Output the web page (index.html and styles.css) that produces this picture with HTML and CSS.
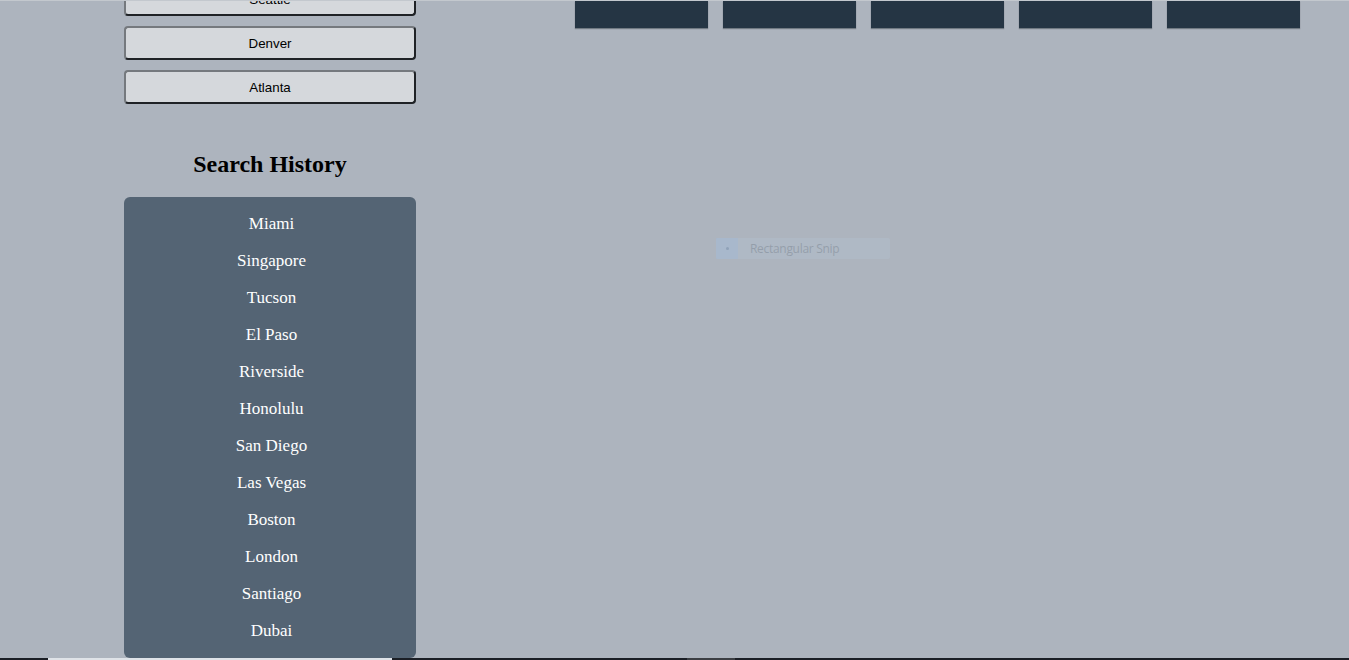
FILE: index.html
```html
<!DOCTYPE html>
<html>
<head>
<meta charset="utf-8">
<link rel="stylesheet" href="styles.css">
<title>Weather Dashboard</title>
</head>
<body>
<div class="topline"></div>
<main class="page">
  <aside class="sidebar">
    <div class="city-buttons">
      <button class="city-btn first">Seattle</button>
      <button class="city-btn">Denver</button>
      <button class="city-btn">Atlanta</button>
    </div>
    <h2 class="history-title">Search History</h2>
    <ul class="history">
      <li>Miami</li>
      <li>Singapore</li>
      <li>Tucson</li>
      <li>El Paso</li>
      <li>Riverside</li>
      <li>Honolulu</li>
      <li>San Diego</li>
      <li>Las Vegas</li>
      <li>Boston</li>
      <li>London</li>
      <li>Santiago</li>
      <li>Dubai</li>
    </ul>
  </aside>
  <section class="forecast">
    <div class="cards">
      <div class="card"></div>
      <div class="card"></div>
      <div class="card"></div>
      <div class="card"></div>
      <div class="card"></div>
    </div>
  </section>
  <div class="snip-ghost">
    <span class="snip-icon"></span>
    <span class="snip-label">Rectangular Snip</span>
  </div>
</main>
<div class="taskbar-edge">
  <span class="seg dark a"></span>
  <span class="seg light b"></span>
  <span class="seg dark c"></span>
  <span class="seg mid d"></span>
  <span class="seg dark e"></span>
</div>
</body>
</html>
```
FILE: styles.css
```css
html, body {
  margin: 0;
  padding: 0;
  height: 660px;
  overflow: hidden;
  background: #adb4be;
}

.topline {
  height: 1px;
  background: #c3c8ce;
}

.page {
  position: relative;
  height: 657px;
  display: flex;
  align-items: flex-start;
  overflow: hidden;
}

.sidebar {
  width: 292px;
  margin-left: 124px;
  display: flex;
  flex-direction: column;
}

.city-buttons {
  display: flex;
  flex-direction: column;
  gap: 10px;
  margin-top: -19px;
}

.city-btn {
  height: 34px;
  width: 100%;
  background: #d5d8dc;
  border: 2px solid;
  border-color: #75797e #1f2226 #1f2226 #75797e;
  border-radius: 4px;
  font-family: "Liberation Sans", Arial, sans-serif;
  font-size: 13.33px;
  color: #000;
  padding: 0;
}

.history-title {
  margin: 47px 0 19px;
  text-align: center;
  font-family: "Liberation Serif", "Times New Roman", serif;
  font-weight: bold;
  font-size: 24px;
  line-height: 27px;
  color: #000;
}

.history {
  list-style: none;
  margin: 0;
  padding: 8px 0 9px;
  background: #546474;
  border-radius: 6px;
  height: 444px;
}

.history li {
  height: 37px;
  line-height: 37px;
  text-align: center;
  font-family: "Liberation Serif", "Times New Roman", serif;
  font-size: 17px;
  color: #ffffff;
  padding-left: 3px;
}

.forecast {
  margin-left: 159px;
}

.cards {
  display: flex;
  gap: 15px;
}

.card {
  width: 133px;
  height: 27px;
  background: #253544;
  box-shadow: 0 1px 1px rgba(40, 50, 60, 0.45);
}

.snip-ghost {
  position: absolute;
  left: 716px;
  top: 237px;
  width: 174px;
  height: 21px;
  display: flex;
  align-items: center;
  gap: 12px;
  background: rgba(180, 195, 212, 0.35);
  border-radius: 2px;
}

.snip-icon {
  width: 22px;
  height: 21px;
  background: rgba(160, 185, 212, 0.45);
  position: relative;
}

.snip-icon::after {
  content: "";
  position: absolute;
  left: 10px;
  top: 9px;
  width: 3px;
  height: 3px;
  border-radius: 50%;
  background: rgba(120, 140, 165, 0.5);
}

.snip-label {
  font-family: "Open Sans", "Noto Sans", sans-serif;
  font-size: 12px;
  letter-spacing: -0.3px;
  color: rgba(140, 150, 162, 0.75);
}

.taskbar-edge {
  display: flex;
  height: 2px;
}

.seg { display: block; height: 2px; }
.seg.dark { background: #1b1f26; }
.seg.light { background: #dfe3e8; }
.seg.mid { background: #3c3f44; }
.seg.a { width: 48px; }
.seg.b { width: 344px; }
.seg.c { width: 295px; }
.seg.d { width: 48px; }
.seg.e { flex: 1; }
```
